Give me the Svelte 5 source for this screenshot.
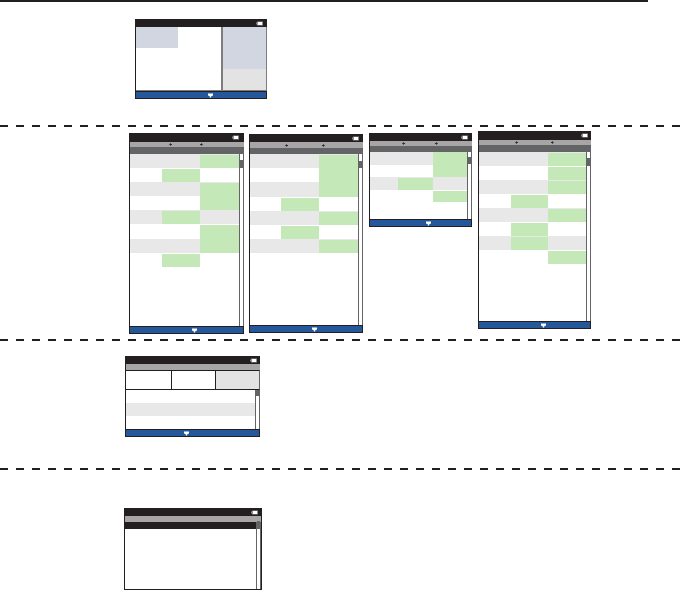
<script>
    // col = which cell is green in that row, join = touches the row above
    const r = (col, join = false) => ({ col, join });

    const schedules = [
        {
            top: 6, left: 129, width: 115, height: 201, status: 9, nav: 5, sub: 7, rowH: 14.1,
            cols: "32px 38px 38.5px", arrows: [7, 0], thumb: [6, 8], batt: 5, icon: 8,
            rows: [r(3), r(2), r(3), r(3, true), r(2), r(3), r(3, true), r(2)]
        },
        {
            top: 7, left: 5, width: 114, height: 199, status: 8, nav: 6, sub: 6, rowH: 14.2,
            cols: "31px 38px 39px", arrows: [4, 3], thumb: [7, 7], batt: 4, icon: 8,
            rows: [r(3), r(3, true), r(3, true), r(2), r(3), r(2), r(3)]
        },
        {
            top: 6, left: 6, width: 103, height: 94, status: 8, nav: 5, sub: 6, rowH: 12.5,
            cols: "28px 35px 34px", arrows: [4, 2], thumb: [5, 7], batt: 4, icon: 8,
            rows: [r(3, true), r(3, true), r(2), r(3)]
        },
        {
            top: 4, left: 6, width: 113, height: 198, status: 9, nav: 5, sub: 7, rowH: 14,
            cols: "32px 37px 38px", arrows: [4, 3], thumb: [6, 8], batt: 3, icon: 9,
            rows: [r(3), r(3), r(3), r(2), r(3), r(2), r(2), r(3)]
        }
    ];
</script>

{#snippet battery(right = 3)}
    <svg class="battery" style="margin-right: {right}px" width="7" height="5" viewBox="0 0 7 5">
        <rect x="1" y="0.5" width="6" height="4" fill="#8f8f8f" />
        <rect x="0" y="1.5" width="1" height="2" fill="#8a8a8a" />
        <rect x="2" y="1" width="4" height="3" fill="#ffffff" />
    </svg>
{/snippet}

{#snippet footer(nudge)}
    <div class="footer">
        <svg style="margin-left: {nudge * 2}px" width="5" height="5" viewBox="0 0 5 5">
            <path d="M0 0.5H5V2.5L3.2 3.2V4.5H1.8V3.2L0 2.5Z" fill="#ffffff" />
        </svg>
    </div>
{/snippet}

{#snippet scrollbar(thumbTop, thumbH)}
    <div class="scrollbar">
        <div class="thumb" style="margin-top: {thumbTop}px; height: {thumbH}px"></div>
    </div>
{/snippet}

<div class="page">
    <div class="solid"></div>

    <section class="band first">
        <div class="phone home">
            <div class="status">{@render battery(4)}</div>
            <div class="split">
                <div class="main"><div class="tile"></div></div>
                <div class="side">
                    <div class="side-top"></div>
                    <div class="side-bottom"></div>
                </div>
            </div>
            {@render footer(9)}
        </div>
    </section>

    <div class="dashed"></div>

    <section class="band second">
        {#each schedules as s}
            <div
                class="phone"
                style="margin-top: {s.top}px; margin-left: {s.left}px; width: {s.width}px; height: {s.height}px"
            >
                <div class="status" style="height: {s.status}px">{@render battery(s.batt)}</div>
                <div class="nav" style="height: {s.nav}px; grid-template-columns: {s.cols}">
                    <span></span>
                    <span style="padding-left: {s.arrows[0]}px">
                        <svg width="3" height="3" viewBox="0 0 3 3"><path d="M0 1.5L2 0V1H3V2H2V3Z" fill="#2e2b2c" /></svg>
                    </span>
                    <span style="padding-left: {s.arrows[1]}px">
                        <svg width="3" height="3" viewBox="0 0 3 3"><path d="M3 1.5L1 0V1H0V2H1V3Z" fill="#2e2b2c" /></svg>
                    </span>
                </div>
                <div class="sub" style="height: {s.sub}px"></div>
                <div class="body">
                    <div class="table">
                        {#each s.rows as row}
                            <div class="row" style="height: {s.rowH}px; grid-template-columns: {s.cols}">
                                {#each [1, 2, 3] as c}
                                    <div class:on={row.col === c} class:join={row.join}></div>
                                {/each}
                            </div>
                        {/each}
                    </div>
                    {@render scrollbar(s.thumb[0], s.thumb[1])}
                </div>
                {@render footer(s.icon)}
            </div>
        {/each}
    </section>

    <div class="dashed"></div>

    <section class="band third">
        <div class="phone tabs-phone">
            <div class="status">{@render battery()}</div>
            <div class="nav plain"></div>
            <div class="tabs">
                <div></div>
                <div></div>
                <div class="active"></div>
            </div>
            <div class="body">
                <div class="table stripes">
                    <div></div>
                    <div class="grey"></div>
                    <div></div>
                </div>
                {@render scrollbar(0, 6)}
            </div>
            {@render footer(-6)}
        </div>
    </section>

    <div class="dashed"></div>

    <section class="band fourth">
        <div class="phone list-phone">
            <div class="status">{@render battery()}</div>
            <div class="nav plain"></div>
            <div class="body">
                <div class="table">
                    <div class="dark-head"></div>
                </div>
                {@render scrollbar(-1, 8)}
            </div>
        </div>
    </section>
</div>

<style>
    :global(body) {
        background: #fff;
    }

    .page {
        width: 680px;
        height: 590px;
        overflow: hidden;
        background: #fff;
    }

    .solid {
        width: 648px;
        height: 2px;
        background: #231f20;
    }

    .dashed {
        height: 2px;
        background: repeating-linear-gradient(90deg, #231f20 0 8px, transparent 8px 16px);
    }

    .band {
        display: flex;
        align-items: flex-start;
        box-sizing: border-box;
    }

    .first {
        height: 123px;
        padding: 17px 0 0 135px;
    }

    .second {
        height: 212px;
    }

    .third {
        height: 127px;
        padding: 15px 0 0 125px;
    }

    .fourth {
        height: 120px;
        padding: 38px 0 0 124px;
    }

    .phone {
        display: flex;
        flex-direction: column;
        flex: none;
        box-sizing: border-box;
        border-left: 1px solid #231f20;
        background: #fff;
    }

    .status {
        flex: none;
        display: flex;
        align-items: center;
        justify-content: flex-end;
        height: 8px;
        margin-left: -1px;
        background: #231f20;
    }

    .battery {
        display: block;
    }

    .nav {
        flex: none;
        display: grid;
        align-items: center;
        background: #a7a5a6;
    }

    .nav span {
        display: flex;
        align-items: center;
    }

    .nav.plain {
        height: 6px;
    }

    .sub {
        flex: none;
        background: #636466;
    }

    .body {
        flex: 1;
        display: flex;
        min-height: 0;
    }

    .table {
        flex: 1;
        min-width: 0;
    }

    .row {
        display: grid;
    }

    .row:nth-child(odd) {
        background: #e8e8e8;
    }

    .on {
        margin-top: 1px;
        background: #c4e8b8;
    }

    .on.join {
        margin-top: 0;
    }

    .scrollbar {
        flex: none;
        box-sizing: border-box;
        width: 5px;
        border-left: 1px solid #636466;
        border-right: 1px solid #636466;
        background: #fff;
    }

    .thumb {
        background: #636466;
    }

    .footer {
        flex: none;
        display: flex;
        align-items: center;
        justify-content: center;
        box-sizing: border-box;
        height: 8px;
        margin-left: -1px;
        border: 1px solid #231f20;
        background: #24589a;
    }

    /* first screen */
    .home {
        width: 132px;
        height: 80px;
    }

    .split {
        flex: 1;
        display: flex;
        min-height: 0;
        border-right: 1px solid #7d7d7d;
        border-bottom: 1px solid #7d7d7d;
    }

    .main {
        flex: 1;
    }

    .tile {
        width: 42px;
        height: 21px;
        background: #d2d6e0;
    }

    .side {
        display: flex;
        flex-direction: column;
        width: 43px;
        border-left: 2px solid #7d7d7d;
    }

    .side-top {
        height: 42px;
        background: #d2d6e0;
    }

    .side-bottom {
        flex: 1;
        background: #e3e3e3;
    }

    /* tabs screen */
    .tabs-phone {
        width: 135px;
        height: 81px;
    }

    .tabs {
        flex: none;
        display: grid;
        grid-template-columns: 45px 44px 1fr;
        height: 20px;
        box-sizing: border-box;
        border-top: 1px solid #231f20;
        border-bottom: 1px solid #231f20;
        border-right: 1px solid #636466;
    }

    .tabs div + div {
        border-left: 1px solid #231f20;
    }

    .tabs .active {
        background: #e3e3e3;
    }

    .stripes div {
        height: 13px;
    }

    .stripes .grey {
        background: #e8e8e8;
    }

    /* list screen */
    .list-phone {
        width: 138px;
        height: 82px;
        border-bottom: 1px solid #231f20;
        border-right: 1px solid #231f20;
    }

    .dark-head {
        height: 7px;
        background: #231f20;
    }
</style>
